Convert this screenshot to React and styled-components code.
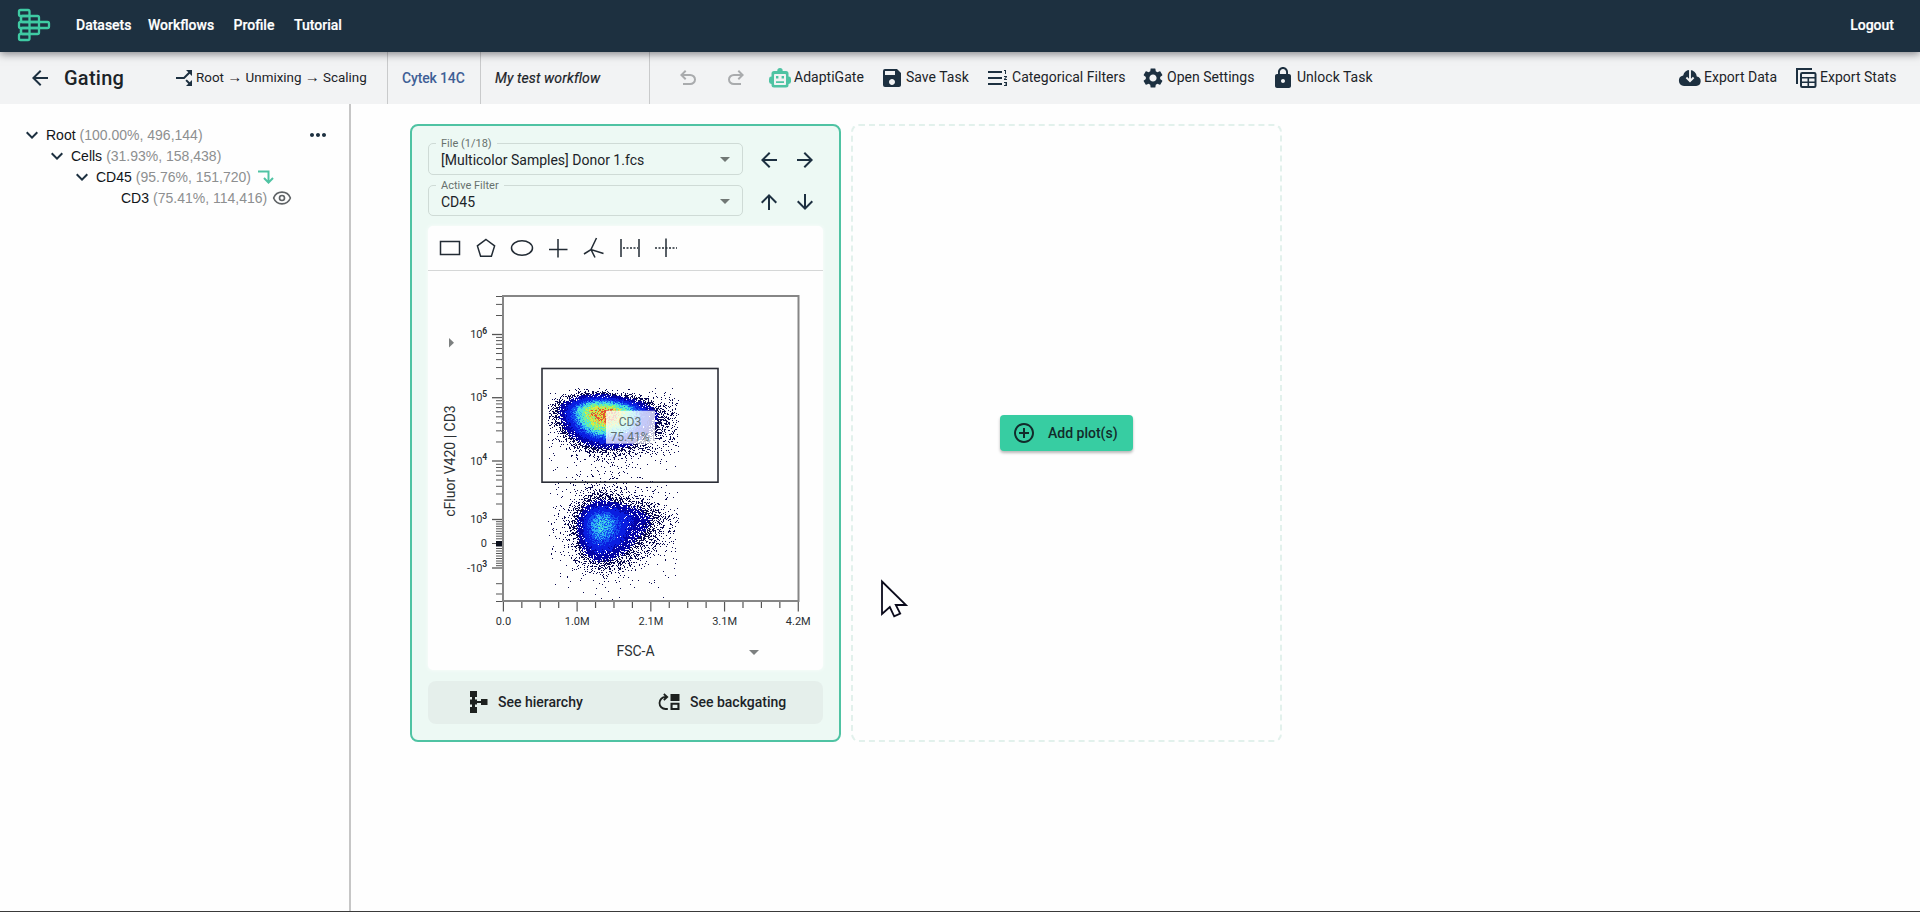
import React from "react";
import styled, { createGlobalStyle } from "styled-components";
import {
  MdAddCircleOutline,
  MdArrowBack,
  MdArrowDownward,
  MdArrowForward,
  MdArrowUpward,
  MdCallSplit,
  MdFormatListNumberedRtl,
  MdKeyboardArrowDown,
  MdLock,
  MdMoreHoriz,
  MdSave,
  MdSettings,
} from "react-icons/md";
import { Eye } from "lucide-react";

const NAVY = "#1d3040";
const GREEN = "#4fc3a3";

const GlobalStyle = createGlobalStyle`
  * { box-sizing: border-box; }
  html, body { margin: 0; height: 100%; }
  body {
    background: #fefefe;
    color: #1c2328;
    font-family: Roboto, "Liberation Sans", sans-serif;
    font-size: 14px;
    overflow: hidden;
  }
  svg { display: block; flex: none; }
  button { font: inherit; color: inherit; background: none; border: 0; padding: 0; }
`;

const Page = styled.div`
  height: 912px;
  display: flex;
  flex-direction: column;
  border-bottom: 1px solid #3a3a3a;
`;

const TopBar = styled.header`
  height: 52px;
  flex: none;
  display: flex;
  align-items: center;
  padding: 0 26px 3px 17px;
  background: ${NAVY};
  color: #fff;
  box-shadow: 0 2px 8px rgba(20, 20, 30, 0.5);
  z-index: 2;
`;

const NavLink = styled.a`
  width: ${(p) => p.$w}px;
  font-weight: 500;
  line-height: 20px;
  padding-top: 1px;
  white-space: nowrap;
  -webkit-text-stroke: 0.2px #fff;
`;

const Nav = styled.nav`
  display: flex;
  flex: 1;
  margin-left: 25px;
`;

const ToolBar = styled.div`
  height: 52px;
  flex: none;
  display: flex;
  background: #f2f3f4;
`;

const Segment = styled.div`
  width: ${(p) => p.$w}px;
  padding-left: ${(p) => p.$pad}px;
  display: flex;
  align-items: center;
  border-right: 1px solid #c9cacb;
  white-space: nowrap;
`;

const Title = styled.h1`
  width: 108px;
  margin: 0 0 0 12px;
  font-size: 20px;
  font-weight: 500;
  line-height: 24px;
  letter-spacing: 0.25px;
`;

const Breadcrumb = styled.span`
  font-size: 13.4px;
  line-height: 20px;
  padding-bottom: 1px;
`;

const Arrow = styled.span`
  font-family: "Liberation Sans", Arial, sans-serif;
  font-size: 15px;
  line-height: 1;
`;

const Tag = styled.span`
  font-size: 14px;
  font-weight: ${(p) => (p.$blue ? 500 : 400)};
  letter-spacing: ${(p) => (p.$blue ? -0.15 : 0.1)}px;
  color: ${(p) => (p.$blue ? "#3f5f96" : "#1c2328")};
  font-style: ${(p) => (p.$blue ? "normal" : "italic")};
  -webkit-text-stroke: ${(p) => (p.$blue ? 0 : 0.2)}px currentColor;
  padding-bottom: 1px;
`;

const RotatedSplit = styled(MdCallSplit)`
  transform: rotate(90deg);
`;

const History = styled.div`
  display: flex;
  align-items: center;
  gap: 24px;
  padding-left: 26px;
  width: 118px;
  color: #a9abad;
`;

const Action = styled.button`
  width: ${(p) => p.$w}px;
  height: 52px;
  display: flex;
  align-items: center;
  gap: ${(p) => (p.$gap === undefined ? 2 : p.$gap)}px;
  white-space: nowrap;

  svg { color: ${NAVY}; }
`;

const ActionLabel = styled.span`
  padding-bottom: 2px;
  letter-spacing: 0.02px;
`;

const Spacer = styled.div`
  flex: 1;
`;

const Body = styled.div`
  flex: 1;
  display: flex;
  min-height: 0;
`;

const Sidebar = styled.aside`
  width: 351px;
  flex: none;
  padding: 20px 18px 0 20px;
  border-right: 2px solid #c6c6c6;
  font-family: "Liberation Sans", Arial, sans-serif;
`;

const TreeRow = styled.div`
  height: 21px;
  display: flex;
  align-items: center;
  padding-left: ${(p) => p.$level * 25}px;
  white-space: nowrap;
  color: #101418;
`;

const Toggle = styled.span`
  width: 24px;
  height: 21px;
  margin-right: 2px;
  display: flex;
  align-items: center;
  color: ${NAVY};
`;

const Stats = styled.span`
  color: #8d8f90;
  margin-left: 4px;
  margin-right: ${(p) => p.$gap || 0}px;
`;

const More = styled.span`
  margin-left: auto;
  margin-right: 1px;
  color: ${NAVY};
`;

const Workspace = styled.main`
  flex: 1;
  display: flex;
  align-items: flex-start;
  gap: 10px;
  padding: 20px 0 0 59px;
`;

const PlotCard = styled.section`
  width: 431px;
  height: 618px;
  flex: none;
  display: flex;
  flex-direction: column;
  padding: 17px 16px 16px;
  border: 2px solid ${GREEN};
  border-radius: 8px;
  background: #edf9f4;
`;

const FieldRow = styled.div`
  height: 32px;
  margin-bottom: 10px;
  display: flex;
`;

const Field = styled.div`
  width: 315px;
  position: relative;
  display: flex;
  align-items: center;
  justify-content: space-between;
  padding: 2px 12px 0 12px;
  border: 1px solid #cfdbd6;
  border-radius: 5px;
`;

const FieldLabel = styled.span`
  position: absolute;
  top: -8px;
  left: 7px;
  padding: 0 5px;
  background: #edf9f4;
  color: #67716d;
  font-size: 11px;
  line-height: 16px;
`;

const FieldValue = styled.span`
  font-size: 14px;
`;

const Caret = styled.span`
  border: 5px solid transparent;
  border-top-color: #717875;
  border-bottom-width: 0;
`;

const Steps = styled.div`
  display: flex;
  align-items: center;
  gap: 12px;
  margin-left: 14px;
  padding-top: 3px;
  color: ${NAVY};
`;

const PlotPanel = styled.div`
  height: 444px;
  flex: none;
  background: #fefefe;
  border-radius: 5px;
  box-shadow: 0 0 3px 1px #f6fcf9;
`;

const GateTools = styled.div`
  height: 45px;
  display: flex;
  align-items: center;
  gap: 12px;
  padding-left: 10px;
  border-bottom: 1px solid #d5d7d7;
  color: #222b34;
`;

const CardFooter = styled.div`
  height: 43px;
  margin-top: 11px;
  display: flex;
  background: #e5efeb;
  border-radius: 8px;
`;

const FooterButton = styled.button`
  width: ${(p) => p.$w}px;
  padding: 0 0 2px ${(p) => p.$pad}px;
  display: flex;
  align-items: center;
  gap: 10px;
  font-weight: 500;
  white-space: nowrap;
`;

const EmptyCard = styled.section`
  width: 431px;
  height: 618px;
  display: flex;
  align-items: center;
  justify-content: center;
  border: 2px dashed #e2f1ec;
  border-radius: 8px;
`;

const AddButton = styled.button`
  width: 133px;
  height: 36px;
  margin-bottom: 1px;
  display: flex;
  align-items: center;
  gap: 12px;
  padding-left: 12px;
  border-radius: 4px;
  background: #37cda2;
  color: #122b2b;
  font-weight: 500;
  box-shadow: 0 2px 3px rgba(0, 0, 0, 0.28);
  white-space: nowrap;
`;

const Pointer = styled.svg`
  position: absolute;
  left: 880px;
  top: 578px;
  z-index: 5;
`;

const Logo = () => (
  <svg width="34" height="34" viewBox="17 9 34 34" fill="none" stroke="#3fcaa3" strokeWidth="2.3">
    <rect x="19" y="11" width="10.5" height="6" rx="1.5" />
    <path d="M21 17v6M21 29v6" />
    <rect x="21" y="17" width="18" height="6" rx="1.5" />
    <rect x="19" y="23" width="30" height="6" rx="1.5" />
    <rect x="21" y="29" width="18" height="6" rx="1.5" />
    <rect x="19" y="35" width="10.5" height="6" rx="1.5" />
    <path d="M29.5 17v18M39 23v6" />
  </svg>
);

const UndoIcon = ({ flip }) => (
  <svg width="24" height="24" viewBox="0 0 24 24" fill="currentColor" transform={flip ? "scale(-1 1)" : undefined}>
    <path d="M7 19v-2h7.1q1.575 0 2.738-1T18 13.500q0-1.500-1.162-2.500T14.100 10H7.800l2.600 2.600L9 14 4 9l5-5 1.400 1.400L7.800 8h6.300q2.425 0 4.163 1.575T20 13.500q0 2.350-1.737 3.925T14.100 19z" />
  </svg>
);

const RobotIcon = () => (
  <svg width="24" height="24" viewBox="0 0 24 24">
    <g fill={GREEN}>
      <circle cx="12" cy="4.800" r="2.700" />
      <rect x="1" y="10.500" width="5" height="7.500" rx="2.400" />
      <rect x="18" y="10.500" width="5" height="7.500" rx="2.400" />
      <rect x="3.500" y="5" width="17" height="16.500" rx="2.500" />
    </g>
    <rect x="6" y="8" width="12" height="11" rx="0.800" fill="#f2f3f4" />
    <path fill={GREEN} d="M8 10h2.400v2.600H8zM13.600 10H16v2.600h-2.400zM8 15.200h8v1.900H8z" />
  </svg>
);

const CloudIcon = () => (
  <svg width="24" height="24" viewBox="0 0 24 24">
    <path
      fill={NAVY}
      d="M6 20a5.300 5.300 0 0 1-.8-10.500A7 7 0 0 1 12 4a7 7 0 0 1 6.800 6.500A4.800 4.800 0 0 1 18.200 20z"
    />
    <path d="M12 3v11M8.400 11.500l3.600 3.600 3.600-3.600" fill="none" stroke="#f2f3f4" strokeWidth="1.900" />
  </svg>
);

const StatsIcon = () => (
  <svg width="24" height="24" viewBox="0 0 24 24" fill="none" stroke={NAVY} strokeWidth="2">
    <path d="M4 18V3h15" />
    <rect x="8" y="7" width="14.500" height="14" rx="1.200" />
    <path d="M8 11.700h14.500M8 16.300h14.500M15.300 11.700V21" strokeWidth="1.600" />
  </svg>
);

const BranchArrow = () => (
  <svg width="16" height="14" viewBox="0 0 16 14" fill="none" stroke={GREEN} strokeWidth="2">
    <path d="M0 1.500h10.500V12.500M6 8l4.500 4.600L15 8" />
  </svg>
);

const HierarchyIcon = () => (
  <svg width="18" height="22" viewBox="0 0 18 22" fill="#1d211f">
    <path d="M0 0h7v6H5v2.500h2V10h4V8h6.500v6H11v-2H7v1.500H5V16h2v6H0v-6h2v-2.500H0v-5h2V6H0z" />
  </svg>
);

const BackgatingIcon = () => (
  <svg width="22" height="18" viewBox="0 0 22 18">
    <path d="M9.800 16H7.500A6 6 0 0 1 7.500 4H9M5.800 1l3.400 3-3.400 3.200" fill="none" stroke="#1d211f" strokeWidth="1.800" />
    <path d="M12.500 1h9v7h-9zM12.500 9.700h9V17h-9zM14.600 11.800v3.100h4.800v-3.100z" fill="#1d211f" fillRule="evenodd" />
  </svg>
);

const TOOL_SHAPES = [
  <rect key="rect" x="2.500" y="5.500" width="19" height="13" />,
  <path key="polygon" d="M12 3.500l8.600 6.400-3.200 10.300H6.600L3.400 9.900z" />,
  <ellipse key="ellipse" cx="12" cy="12" rx="10.500" ry="7.300" />,
  <path key="quadrant" d="M12 3v18.500M3 13.500h18.500" />,
  <path key="skewed" d="M14.500 2L9 13.500l4 8M2 18l7-4.500 12.500 4" />,
  <g key="range">
    <path d="M3 3v18M21 3v18" />
    <path d="M5 12h15" strokeDasharray="2 1.500" />
  </g>,
  <g key="split">
    <path d="M12 2.500v18.500" />
    <path d="M1 12h22" strokeDasharray="2 1.500" />
  </g>,
];

function seeded(seed) {
  let s = seed;
  return () => {
    s = (s * 1664525 + 1013904223) % 4294967296;
    return s / 4294967296;
  };
}

// Bell-shaped bump with a separate spread on each of its four sides.
function blob(x, y, cx, cy, left, right, up, down, power = 2) {
  const dx = (x - cx) / (x < cx ? left : right);
  const dy = (y - cy) / (y < cy ? up : down);
  return Math.exp(-Math.pow(Math.hypot(dx, dy), power) / 2);
}

const SCALE = [
  [0.95, "#e2552f"],
  [0.87, "#f0a445"],
  [0.7, "#dfe93f"],
  [0.55, "#8df07a"],
  [0.38, "#4fe8d2"],
  [0.28, "#2fb0f4"],
  [0.19, "#1450f0"],
  [0.09, "#0a1ee0"],
  [0.03, "#0505a8"],
  [0, "#090950"],
];

function buildEvents() {
  const rand = seeded(42);
  const layers = SCALE.map(() => "");
  for (let y = 388; y < 601; y++) {
    for (let x = 548; x < 679; x++) {
      const upper = blob(x, y - (x - 603) * 0.05, 603, 413, 19, 23, 8.2, 15, 2.25);
      const lower =
        0.25 * blob(x, y, 600, 522, 10.5, 13, 8.5, 15) +
        0.12 * blob(x, y, 598, 534, 10, 18, 19, 15) +
        0.06 * blob(x, y, 628, 518, 20, 17, 8.500, 15);
      const halo =
        0.012 * blob(x, y, 608, 418, 34, 34, 10, 20) +
        0.008 * blob(x, y, 650, 418, 30, 60, 14, 15) +
        0.0075 * blob(x, y, 614, 518, 34, 34, 12, 28) +
        0.0009 * blob(x, y, 607, 500, 32, 36, 60, 60);
      const density = upper + lower + halo;
      const fill = 1 - Math.exp(-density * 32);
      if (rand() > fill) continue;
      const value = (upper + lower) * (0.68 + rand() * 0.56);
      const level = SCALE.findIndex(([min]) => value >= min);
      layers[level] += `M${x} ${y}h1v1h-1z`;
    }
  }
  return layers;
}

const EVENTS = buildEvents();

const DECADES = [
  { y: 334.5, exp: "6" },
  { y: 397.7, exp: "5" },
  { y: 461, exp: "4" },
  { y: 519.5, exp: "3" },
  { y: 568, exp: "3", negative: true },
];

const MINOR_Y = [
  296.5, 304.4, 315.5,
  ...[2, 3, 4, 5, 6, 7, 8, 9].map((n) => 397.7 - 63.2 * Math.log10(n)),
  ...[2, 3, 4, 5, 6, 7, 8, 9].map((n) => 461 - 63.2 * Math.log10(n)),
  504, 494, 486.3, 480, 475.3, 471, 467.500, 464.300,
  521.7, 524, 526.3, 528.8, 531.3, 533.8, 536.2, 538.8,
  548.500, 551, 553.500, 556, 558.500, 561, 563.300, 565.700,
  583.7, 594, 601.500,
];

const X_LABELS = ["0.0", "1.0M", "2.1M", "3.1M", "4.2M"];

function ScatterPlot() {
  return (
    <svg width="395" height="399" viewBox="428 271 395 399" fontFamily="Roboto, sans-serif" fill="#2b3033">
      <g shapeRendering="crispEdges">
        {EVENTS.map((d, i) => (
          <path key={i} d={d} fill={SCALE[i][1]} />
        ))}
      </g>
      <path d="M503 296H798.500V601H503z" fill="none" stroke="#868686" strokeWidth="2" />
      <g stroke="#555" strokeWidth="1">
        {MINOR_Y.map((y) => (
          <path key={y} d={`M496 ${y}h6`} />
        ))}
        {DECADES.map((t) => (
          <path key={t.y} d={`M492 ${t.y}h10`} strokeWidth="1.300" />
        ))}
        <path d="M492 543.500h10" />
      </g>
      <rect x="496" y="541" width="6" height="5.500" fill="#0a0f1c" />
      <g stroke="#555" strokeWidth="1.200">
        {Array.from({ length: 17 }, (_, i) => (
          <path key={i} d={`M${503.400 + i * 18.430} 602v${i % 4 ? 6 : 9.500}`} />
        ))}
      </g>
      {DECADES.map((t) => (
        <g key={t.y}>
          <text x="482.500" y={t.y + 3.500} textAnchor="end" fontSize="11">
            {t.negative ? "-10" : "10"}
          </text>
          <text x="482.300" y={t.y - 1} fontSize="8.500" fontWeight="700">
            {t.exp}
          </text>
        </g>
      ))}
      <text x="487" y="546.800" textAnchor="end" fontSize="11">0</text>
      {X_LABELS.map((label, i) => (
        <text key={label} x={503.500 + i * 73.700} y="625" textAnchor="middle" fontSize="11">
          {label}
        </text>
      ))}
      <text x="635.500" y="656" textAnchor="middle" fontSize="14">FSC-A</text>
      <path d="M749 650h10l-5 5z" fill="#7d8080" />
      <text transform="translate(455 461) rotate(-90)" textAnchor="middle" fontSize="14">
        cFluor V420 | CD3
      </text>
      <path d="M449 338v9.500l5-4.750z" fill="#7d8080" />
      <rect x="542" y="368.500" width="176" height="113.700" fill="none" stroke="#2b2d36" strokeWidth="1.600" />
      <rect x="606" y="410.700" width="49" height="33" fill="#fff" fillOpacity="0.76" />
      <g fill="#5d6f70" fontSize="12" textAnchor="middle">
        <text x="630" y="426">CD3</text>
        <text x="630" y="441">75.41%</text>
      </g>
    </svg>
  );
}

const TREE = [
  { name: "Root", stats: "(100.00%, 496,144)", open: true, more: true },
  { name: "Cells", stats: "(31.93%, 158,438)", open: true },
  { name: "CD45", stats: "(95.76%, 151,720)", open: true, gap: 7, icon: <BranchArrow /> },
  { name: "CD3", stats: "(75.41%, 114,416)", gap: 5, icon: <Eye size={20} color="#5f6366" strokeWidth={2} /> },
];

export default function App() {
  return (
    <Page>
      <GlobalStyle />
      <TopBar>
        <Logo />
        <Nav>
          <NavLink $w={72}>Datasets</NavLink>
          <NavLink $w={85.500}>Workflows</NavLink>
          <NavLink $w={60.500}>Profile</NavLink>
          <NavLink $w={60}>Tutorial</NavLink>
        </Nav>
        <NavLink>Logout</NavLink>
      </TopBar>
      <ToolBar>
        <Segment $w={388} $pad={28}>
          <MdArrowBack size={24} color={NAVY} />
          <Title>Gating</Title>
          <RotatedSplit size={24} color={NAVY} />
          <Breadcrumb>
            Root <Arrow>→</Arrow> Unmixing <Arrow>→</Arrow> Scaling
          </Breadcrumb>
        </Segment>
        <Segment $w={93} $pad={14}>
          <Tag $blue>Cytek 14C</Tag>
        </Segment>
        <Segment $w={169} $pad={14}>
          <Tag>My test workflow</Tag>
        </Segment>
        <History>
          <UndoIcon />
          <UndoIcon flip />
        </History>
        <Action $w={112}><RobotIcon /><ActionLabel>AdaptiGate</ActionLabel></Action>
        <Action $w={106}><MdSave size={24} /><ActionLabel>Save Task</ActionLabel></Action>
        <Action $w={155}><MdFormatListNumberedRtl size={24} /><ActionLabel>Categorical Filters</ActionLabel></Action>
        <Action $w={130}><MdSettings size={24} /><ActionLabel>Open Settings</ActionLabel></Action>
        <Action $w={110}><MdLock size={24} /><ActionLabel>Unlock Task</ActionLabel></Action>
        <Spacer />
        <Action $w={115}><CloudIcon /><ActionLabel>Export Data</ActionLabel></Action>
        <Action $w={127} $gap={3}><StatsIcon /><ActionLabel>Export Stats</ActionLabel></Action>
      </ToolBar>
      <Body>
        <Sidebar>
          {TREE.map((node, level) => (
            <TreeRow key={node.name} $level={level}>
              <Toggle>{node.open && <MdKeyboardArrowDown size={24} />}</Toggle>
              {node.name}
              <Stats $gap={node.gap}>{node.stats}</Stats>
              {node.icon}
              {node.more && <More><MdMoreHoriz size={24} /></More>}
            </TreeRow>
          ))}
        </Sidebar>
        <Workspace>
          <PlotCard>
            <FieldRow>
              <Field>
                <FieldLabel>File (1/18)</FieldLabel>
                <FieldValue>[Multicolor Samples] Donor 1.fcs</FieldValue>
                <Caret />
              </Field>
              <Steps><MdArrowBack size={24} /><MdArrowForward size={24} /></Steps>
            </FieldRow>
            <FieldRow>
              <Field>
                <FieldLabel>Active Filter</FieldLabel>
                <FieldValue>CD45</FieldValue>
                <Caret />
              </Field>
              <Steps><MdArrowUpward size={24} /><MdArrowDownward size={24} /></Steps>
            </FieldRow>
            <PlotPanel>
              <GateTools>
                {TOOL_SHAPES.map((shape) => (
                  <svg key={shape.key} width="24" height="24" viewBox="0 0 24 24" fill="none" stroke="currentColor" strokeWidth="1.500">
                    {shape}
                  </svg>
                ))}
              </GateTools>
              <ScatterPlot />
            </PlotPanel>
            <CardFooter>
              <FooterButton $w={190} $pad={42}><HierarchyIcon />See hierarchy</FooterButton>
              <FooterButton $w={205} $pad={40}><BackgatingIcon />See backgating</FooterButton>
            </CardFooter>
          </PlotCard>
          <EmptyCard>
            <AddButton><MdAddCircleOutline size={24} />Add plot(s)</AddButton>
          </EmptyCard>
        </Workspace>
      </Body>
      <Pointer width="30" height="40" viewBox="880 578 30 40">
        <path
          d="M882 581.500V614l7.800-7 4.400 9.300 6-2.800-4.400-8.500H906z"
          fill="#fff"
          stroke="#0b0b1c"
          strokeWidth="1.800"
        />
      </Pointer>
    </Page>
  );
}
